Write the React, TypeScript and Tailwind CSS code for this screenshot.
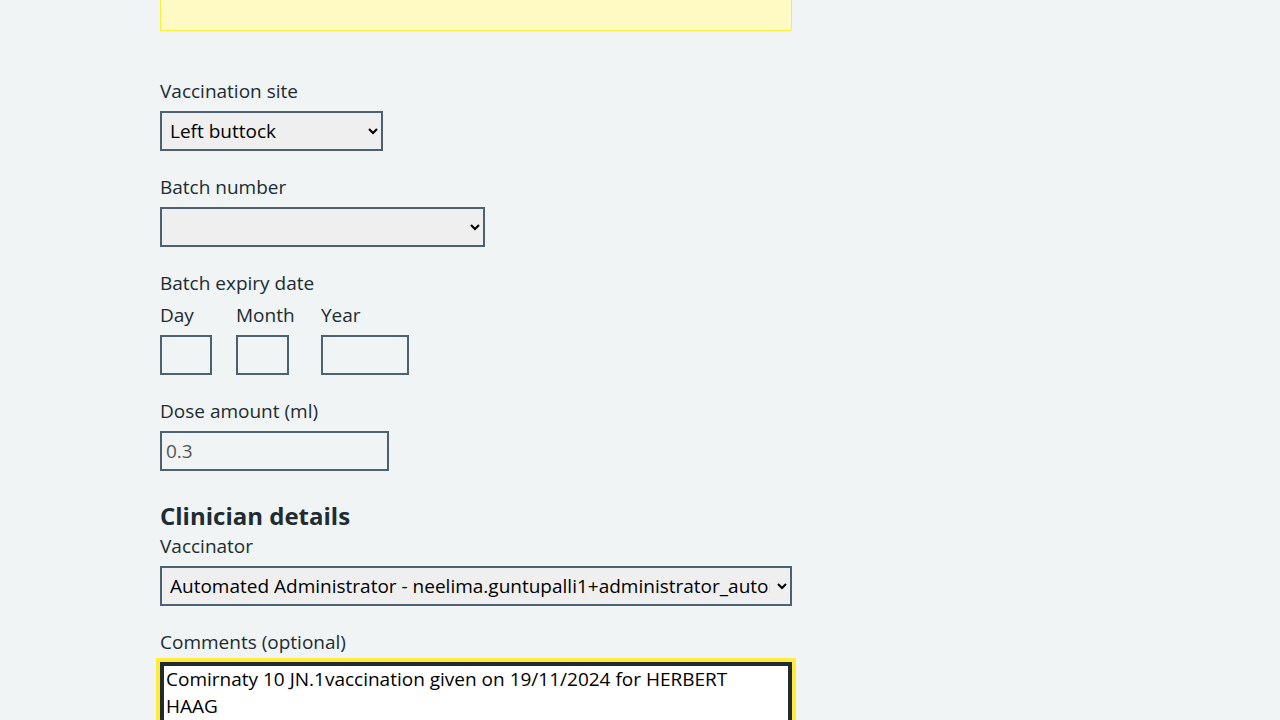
import { useState } from "react";

const labelCls = "block text-[19px] leading-[24px] text-[#212b32] mb-2";
const boxCls = "h-10 border-2 border-[#4c6272] text-[19px] text-black";

export default function App() {
  const [comments, setComments] = useState(
    "Comirnaty 10 JN.1vaccination given on 19/11/2024 for HERBERT HAAG"
  );

  return (
    <div
      className="min-h-screen bg-[#f0f4f5] text-[#212b32]"
      style={{ fontFamily: '"Open Sans", Arial, sans-serif' }}
    >
      <div className="mx-auto w-[960px]">
        <div className="w-[632px]">
          {/* warning box, cut by the top of the window */}
          <div className="h-[31px] border border-t-0 border-[#ffeb3b] bg-[#fff9c4]" />

          <div className="mt-12">
            {/* Vaccination site */}
            <div className="mb-6">
              <label className={labelCls}>Vaccination site</label>
              <select
                defaultValue="left-buttock"
                className={`${boxCls} w-[223px] bg-[#efefef] px-1`}
              >
                <option value="left-buttock">Left buttock</option>
                <option value="right-buttock">Right buttock</option>
                <option value="left-arm">Left arm</option>
              </select>
            </div>

            {/* Batch number */}
            <div className="mb-6">
              <label className={labelCls}>Batch number</label>
              <select defaultValue="" className={`${boxCls} w-[325px] bg-[#efefef] px-1`}>
                <option value=""></option>
              </select>
            </div>

            {/* Batch expiry date */}
            <fieldset className="mb-6">
              <legend className="text-[19px] leading-[24px] mb-2">Batch expiry date</legend>
              <div className="flex">
                <div className="w-[76px] shrink-0">
                  <label className={labelCls}>Day</label>
                  <input className={`${boxCls} w-[52px] bg-transparent px-1`} />
                </div>
                <div className="w-[85px] shrink-0">
                  <label className={labelCls}>Month</label>
                  <input className={`${boxCls} w-[53px] bg-transparent px-1`} />
                </div>
                <div>
                  <label className={labelCls}>Year</label>
                  <input className={`${boxCls} w-[88px] bg-transparent px-1`} />
                </div>
              </div>
            </fieldset>

            {/* Dose amount */}
            <div>
              <label className={labelCls}>Dose amount (ml)</label>
              <input
                readOnly
                value="0.3"
                className={`${boxCls} w-[229px] bg-transparent px-1 !text-[#555555]`}
              />
            </div>

            <h2 className="mt-[30px] mb-[3px] text-[24px] leading-[30px] font-bold">
              Clinician details
            </h2>

            {/* Vaccinator */}
            <div className="mb-6">
              <label className={labelCls}>Vaccinator</label>
              <select className={`${boxCls} w-full bg-[#efefef] px-1`}>
                <option>
                  Automated Administrator - neelima.guntupalli1+administrator_automated@nhs.net
                </option>
              </select>
            </div>

            {/* Comments */}
            <div>
              <label className={labelCls}>Comments (optional)</label>
              <textarea
                rows={5}
                value={comments}
                onChange={(e) => setComments(e.target.value)}
                className="block w-full resize-none border-2 border-[#212b32] bg-white pl-1 pr-4 py-[2px] text-[19px] leading-[27px] text-black shadow-[inset_0_0_0_2px_#212b32] outline-4 outline-[#ffeb3b]"
              />
            </div>
          </div>
        </div>
      </div>
    </div>
  );
}
